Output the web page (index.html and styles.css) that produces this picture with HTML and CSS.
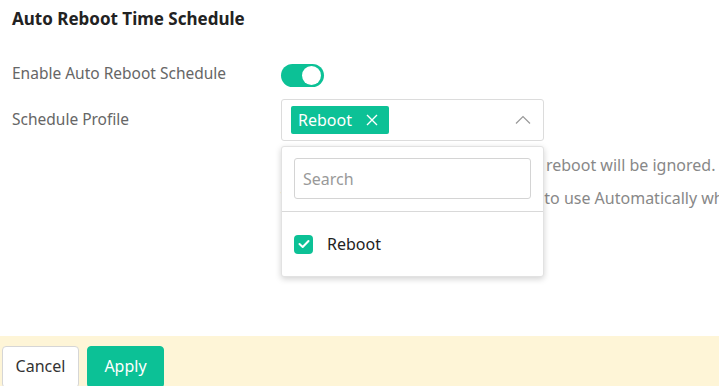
FILE: index.html
```html
<!DOCTYPE html>
<html>
<head>
<meta charset="utf-8">
<title>Auto Reboot</title>
<link rel="stylesheet" href="styles.css">
</head>
<body>
<div class="page">
  <div class="section-title">Auto Reboot Time Schedule</div>

  <div class="form">
    <div class="row">
      <div class="label">Enable Auto Reboot Schedule</div>
      <div class="field">
        <span class="switch on"><span class="knob"></span></span>
      </div>
    </div>

    <div class="row">
      <div class="label">Schedule Profile</div>
      <div class="field">
        <div class="select">
          <span class="tag">Reboot
            <svg class="tag-x" width="12" height="12" viewBox="0 0 12 12"><path d="M1 1 L11 11 M11 1 L1 11" stroke="#fff" stroke-width="1.4" fill="none"/></svg>
          </span>
          <svg class="chevron" width="16" height="10" viewBox="0 0 16 10"><path d="M1 8.5 L8 1.5 L15 8.5" stroke="#999" stroke-width="1.2" fill="none"/></svg>

          <div class="dropdown">
            <div class="search-wrap">
              <input class="search" type="text" placeholder="Search">
            </div>
            <div class="option">
              <span class="check">
                <svg width="12" height="10" viewBox="0 0 12 10"><path d="M1.5 5 L4.7 8 L10.5 2" stroke="#fff" stroke-width="2" fill="none" stroke-linecap="round" stroke-linejoin="round"/></svg>
              </span>
              <span class="option-text">Reboot</span>
            </div>
          </div>
        </div>
        <p class="hint">If the device is busy, the scheduled reboot will be ignored.</p>
        <p class="hint">To avoid downtime, it is suggested to use Automatically when possible.</p>
      </div>
    </div>
  </div>
</div>

<div class="footer">
  <button class="btn">Cancel</button>
  <button class="btn primary">Apply</button>
</div>
</body>
</html>
```

FILE: styles.css
```css
html, body { margin: 0; padding: 0; background: #fff; }
body {
  font-family: "Noto Sans", "Open Sans", sans-serif;
  color: #333;
  width: 719px;
  height: 386px;
  overflow: hidden;
  position: relative;
}

.page { padding: 6px 12px 0 12px; height: 330px; }

.section-title {
  font-size: 17px;
  font-weight: 700;
  color: #222;
  line-height: 26px;
}

.form { margin-top: 29px; }

.row { display: flex; align-items: flex-start; }
.row + .row { margin-top: 12px; }

.label {
  width: 269px;
  font-size: 15.5px;
  color: #666;
  line-height: 24px;
  flex-shrink: 0;
}
.row + .row .label { padding-top: 8px; }

.field { flex: 1; }

.switch {
  display: inline-block;
  width: 43px;
  height: 23px;
  border-radius: 12px;
  background: #0cc196;
  position: relative;
  vertical-align: top;
  margin-top: 3px;
}
.switch .knob {
  position: absolute;
  top: 2px;
  right: 3px;
  width: 19px;
  height: 19px;
  border-radius: 50%;
  background: #fff;
}

.select {
  position: relative;
  width: 263px;
  height: 42px;
  box-sizing: border-box;
  border: 1px solid #dcdcdc;
  border-radius: 3px;
  display: flex;
  align-items: center;
  padding: 0 9px;
}

.tag {
  display: inline-flex;
  align-items: center;
  height: 28px;
  padding: 0 11px 0 7px;
  background: #0cc196;
  color: #fff;
  font-size: 16px;
  border-radius: 2px;
}
.tag-x { margin-left: 14px; }

.chevron { margin-left: auto; margin-right: 3px; }

.dropdown {
  position: absolute;
  top: 46px;
  left: -1px;
  width: 263px;
  box-sizing: border-box;
  background: #fff;
  border: 1px solid #e2e2e2;
  border-radius: 3px;
  box-shadow: 0 2px 6px rgba(0, 0, 0, 0.18);
  z-index: 5;
}
.search-wrap { padding: 11px 12px 12px 12px; border-bottom: 1px solid #d9d9d9; }
.search {
  display: block;
  width: 100%;
  height: 41px;
  box-sizing: border-box;
  border: 1px solid #d4d4d4;
  border-radius: 3px;
  padding: 0 8px;
  font-family: "Noto Sans", "Open Sans", sans-serif;
  font-size: 16px;
  color: #333;
  outline: none;
}
.search::placeholder { color: #999; }

.option {
  display: flex;
  align-items: center;
  height: 64px;
  padding-left: 12px;
}
.check {
  width: 19px;
  height: 19px;
  border-radius: 4px;
  background: #0cc196;
  display: inline-flex;
  align-items: center;
  justify-content: center;
}
.option-text { margin-left: 14px; font-size: 16px; color: #222; }

.hint {
  margin: 0;
  font-size: 16px;
  color: #888;
  white-space: nowrap;
  line-height: 24px;
}
.hint:first-of-type { margin-top: 12px; }
.hint + .hint { margin-top: 9px; }

.footer {
  background: #fef5d7;
  height: 50px;
  padding: 10px 0 0 2px;
  box-sizing: border-box;
  display: flex;
  align-items: flex-start;
  gap: 8px;
}
.btn {
  width: 77px;
  height: 42px;
  border: 1px solid #d6d6d6;
  border-radius: 4px;
  background: #fff;
  color: #333;
  font-family: "Noto Sans", "Open Sans", sans-serif;
  font-size: 16px;
  padding: 0 0 2px 0;
}
.btn.primary {
  background: #0cc196;
  border-color: #0cc196;
  color: #fff;
}
```
